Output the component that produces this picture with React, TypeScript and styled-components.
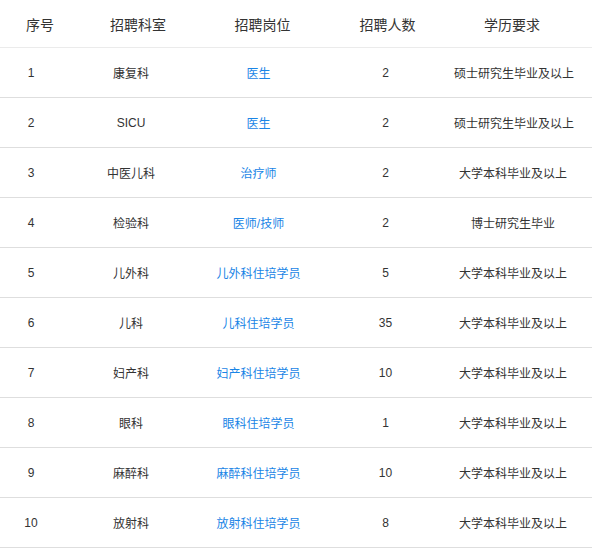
import React from "react";
import styled, { createGlobalStyle } from "styled-components";

const Global = createGlobalStyle`
  html, body { margin: 0; padding: 0; background: #fff; }
  body { font-family: "Liberation Sans", "Noto Sans CJK SC", sans-serif; color: #333; }
`;

const Table = styled.div`
  width: 592px;
  display: flex;
  flex-direction: column;
`;

const HeadRow = styled.div`
  display: grid;
  grid-template-columns: 80px 116px 133px 117px 132px 1fr;
  height: 47px;
  border-bottom: 1px solid #ebebeb;
  align-items: center;
`;

const BodyRow = styled.div`
  display: grid;
  grid-template-columns: 62px 138px 117px 137px 118px 1fr;
  height: 49px;
  border-bottom: 1px solid #dedede;
  align-items: center;
`;

const HeadCell = styled.div`
  text-align: center;
  font-size: 14px;
  color: #333;
  white-space: nowrap;
`;

const Cell = styled.div<{ $link?: boolean }>`
  text-align: center;
  font-size: 12px;
  color: ${(p) => (p.$link ? "#1a85e6" : "#333")};
  white-space: nowrap;
`;

const rows: [string, string, string, string, string][] = [
  ["1", "康复科", "医生", "2", "硕士研究生毕业及以上"],
  ["2", "SICU", "医生", "2", "硕士研究生毕业及以上"],
  ["3", "中医儿科", "治疗师", "2", "大学本科毕业及以上"],
  ["4", "检验科", "医师/技师", "2", "博士研究生毕业"],
  ["5", "儿外科", "儿外科住培学员", "5", "大学本科毕业及以上"],
  ["6", "儿科", "儿科住培学员", "35", "大学本科毕业及以上"],
  ["7", "妇产科", "妇产科住培学员", "10", "大学本科毕业及以上"],
  ["8", "眼科", "眼科住培学员", "1", "大学本科毕业及以上"],
  ["9", "麻醉科", "麻醉科住培学员", "10", "大学本科毕业及以上"],
  ["10", "放射科", "放射科住培学员", "8", "大学本科毕业及以上"],
];

export default function App() {
  return (
    <>
      <Global />
      <Table>
        <HeadRow>
          <HeadCell>序号</HeadCell>
          <HeadCell>招聘科室</HeadCell>
          <HeadCell>招聘岗位</HeadCell>
          <HeadCell>招聘人数</HeadCell>
          <HeadCell>学历要求</HeadCell>
          <div />
        </HeadRow>
        {rows.map((r) => (
          <BodyRow key={r[0]}>
            <Cell>{r[0]}</Cell>
            <Cell>{r[1]}</Cell>
            <Cell $link>{r[2]}</Cell>
            <Cell>{r[3]}</Cell>
            <Cell>{r[4]}</Cell>
            <div />
          </BodyRow>
        ))}
      </Table>
    </>
  );
}
